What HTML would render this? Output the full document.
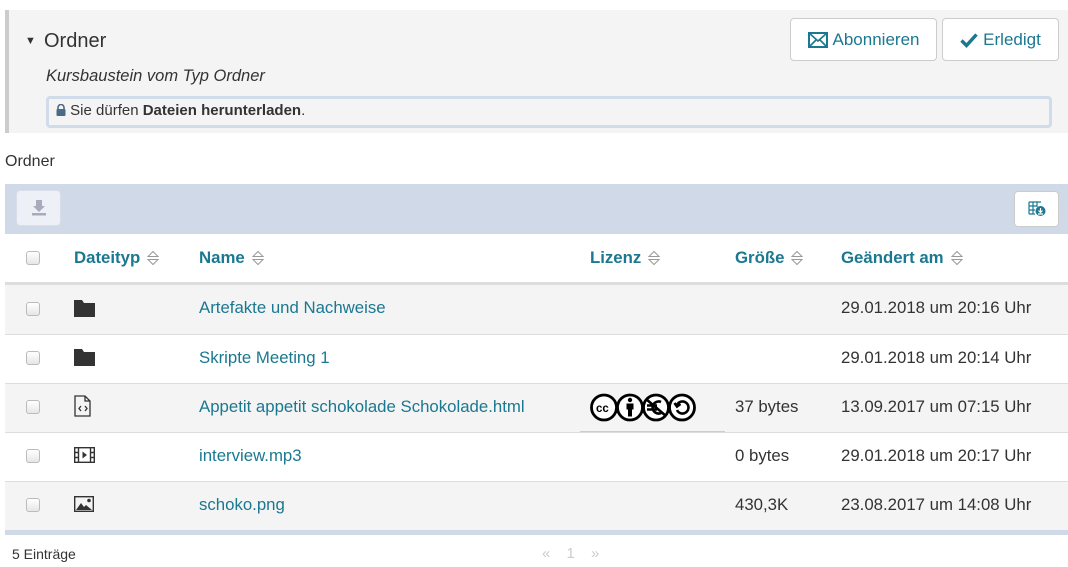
<!DOCTYPE html>
<html><head><meta charset="utf-8"><style>
*{box-sizing:border-box;margin:0;padding:0}
body{width:1068px;height:567px;background:#fff;font-family:"Liberation Sans",sans-serif;color:#333;position:relative;overflow:hidden;font-size:15px}
.a{position:absolute}
.panel{left:5px;top:10px;width:1063px;height:123px;background:#f4f4f4;border-left:4px solid #ccc}
.btn{background:#fff;border:1px solid #ccc;border-radius:4px;color:#1a7891;font-size:17px;display:flex;align-items:center;justify-content:center;gap:5px}
.teal{color:#1a7891}
.cb{width:14px;height:14px;border:1px solid #bbb;border-radius:3px;background:linear-gradient(#fff,#e6e6e6)}
.row{left:5px;width:1063px;height:49px;border-top:1px solid #ddd}
.row span{position:absolute;top:13px;font-size:16.8px}
.hd{font-weight:bold;font-size:16.8px;top:248px;color:#1a7891;display:flex;align-items:center}
.hd svg{margin-left:7px}
</style></head><body>
<div class="a panel"></div>
<div class="a" style="left:25px;top:35px;font-size:11px">&#9660;</div>
<div class="a" style="left:44px;top:30px;font-size:20px;color:#333">Ordner</div>
<div class="a" style="left:46px;top:67px;font-style:italic;font-size:16.5px">Kursbaustein vom Typ Ordner</div>
<div class="a" style="left:46px;top:96px;width:1006px;height:32px;border:3px solid #d1dcea;border-radius:4px;background:#f4f4f4;padding:3px 0 0 7px;font-size:15px">
<svg width="10" height="12" viewBox="0 0 10 12" style="vertical-align:-1px"><path d="M2 5V3.5a3 3 0 0 1 6 0V5" fill="none" stroke="#4a6a8a" stroke-width="1.6"/><rect x="0.5" y="5" width="9" height="7" rx="1" fill="#4a6a8a"/></svg> Sie dürfen <b>Dateien herunterladen</b>.</div>
<div class="a btn" style="left:790px;top:18px;width:147px;height:43px"><svg width="20" height="16" viewBox="0 0 20 16"><rect x="1" y="1" width="18" height="14" fill="none" stroke="#1a7891" stroke-width="2"/><path d="M1 1l9 8 9-8M1 15l7-7M19 15l-7-7" fill="none" stroke="#1a7891" stroke-width="1.6"/></svg>Abonnieren</div>
<div class="a btn" style="left:942px;top:18px;width:117px;height:43px"><svg width="18" height="16" viewBox="0 0 18 16"><path d="M1.5 8.5l5 5L16.5 2.5" fill="none" stroke="#1a7891" stroke-width="3.4"/></svg>Erledigt</div>
<div class="a" style="left:5px;top:153px;font-size:16px">Ordner</div>
<div class="a" style="left:5px;top:184px;width:1063px;height:50px;background:#cfd9e8"></div>
<div class="a" style="left:16px;top:190px;width:45px;height:36px;background:#eef0f7;border:1px solid #d8dde8;border-radius:4px"><svg class="a" style="left:14px;top:8px" width="16" height="17" viewBox="0 0 16 17"><path d="M5 1h6v6h3l-6 6-6-6h3z" fill="#aab"/><rect x="1" y="14" width="14" height="2.5" fill="#aab"/></svg></div>
<div class="a" style="left:1014px;top:191px;width:45px;height:36px;background:#fff;border:1px solid #ccc;border-radius:4px"><svg class="a" style="left:13px;top:9px" width="18" height="16" viewBox="0 0 18 16"><path d="M1 1h12M1 5h8M1 9h6M1 13h6M1 1v12M5 1v12M9 1v5" stroke="#1a7891" stroke-width="1.2" fill="none"/><circle cx="12.5" cy="10" r="5" fill="#1a7891"/><path d="M12.5 7v4M10.5 9.5l2 2 2-2M10 13h5" stroke="#fff" stroke-width="1.2" fill="none"/></svg></div>
<div class="a cb" style="left:26px;top:251px"></div>
<div class="a hd" style="left:74px">Dateityp<svg width="12" height="16" viewBox="0 0 12 16"><path d="M1 6.5L6 1.5l5 5zM1 9.5l5 5 5-5z" fill="none" stroke="#999"/></svg></div>
<div class="a hd" style="left:199px">Name<svg width="12" height="16" viewBox="0 0 12 16"><path d="M1 6.5L6 1.5l5 5zM1 9.5l5 5 5-5z" fill="none" stroke="#999"/></svg></div>
<div class="a hd" style="left:590px">Lizenz<svg width="12" height="16" viewBox="0 0 12 16"><path d="M1 6.5L6 1.5l5 5zM1 9.5l5 5 5-5z" fill="none" stroke="#999"/></svg></div>
<div class="a hd" style="left:735px">Größe<svg width="12" height="16" viewBox="0 0 12 16"><path d="M1 6.5L6 1.5l5 5zM1 9.5l5 5 5-5z" fill="none" stroke="#999"/></svg></div>
<div class="a hd" style="left:841px">Geändert am<svg width="12" height="16" viewBox="0 0 12 16"><path d="M1 6.5L6 1.5l5 5zM1 9.5l5 5 5-5z" fill="none" stroke="#999"/></svg></div>
<div class="a" style="left:5px;top:282px;width:1063px;height:3px;background:#ddd"></div>

<div class="a row" style="top:285px;background:#f4f4f4;border-top:none"><div class="a cb" style="left:21px;top:17px"></div><svg class="a" style="left:69px;top:15px" width="21" height="17"><path d="M0 0h8l2 3h11v14H0z" fill="#333"/></svg><span class="teal" style="left:194px">Artefakte und Nachweise</span><span style="left:836px">29.01.2018 um 20:16 Uhr</span></div>
<div class="a row" style="top:334px;background:#fff"><div class="a cb" style="left:21px;top:16px"></div><svg class="a" style="left:69px;top:14px" width="21" height="17"><path d="M0 0h8l2 3h11v14H0z" fill="#333"/></svg><span class="teal" style="left:194px">Skripte Meeting 1</span><span style="left:836px">29.01.2018 um 20:14 Uhr</span></div>
<div class="a row" style="top:383px;background:#f4f4f4"><div class="a cb" style="left:21px;top:16px"></div><svg class="a" style="left:69px;top:11px" width="18" height="22" viewBox="0 0 18 22"><path d="M1 1h10l5 5v15H1z M11 1v5h5" fill="none" stroke="#333" stroke-width="1.3"/><path d="M7 11l-2 2.5 2 2.5M11 11l2 2.5-2 2.5" fill="none" stroke="#333" stroke-width="1.3"/></svg><span class="teal" style="left:194px">Appetit appetit schokolade Schokolade.html</span>
<svg class="a" style="left:580px;top:9px" width="118" height="29" viewBox="0 0 118 29"><g fill="#fff" stroke="#000" stroke-width="2.8"><circle cx="19" cy="14.5" r="12.5"/><circle cx="45" cy="14.5" r="12.5"/><circle cx="71" cy="14.5" r="12.5"/><circle cx="97" cy="14.5" r="12.5"/></g><text x="11" y="19" font-size="11.5" font-weight="bold" font-family="Liberation Sans">cc</text><circle cx="45" cy="7" r="2.2" fill="#000"/><path d="M41.5 10.5h7v6h-1.5v7h-4v-7h-1.5z" fill="#000"/><path d="M76 9a6 6 0 1 0 0 11M62 12.5h10M62 16.5h10M61 6l20 17" fill="none" stroke="#000" stroke-width="2.6"/><path d="M92 12a6 6 0 1 1 0 5M89.5 10l2.5 3.5 3.5-2.5" fill="none" stroke="#000" stroke-width="2.6"/></svg>
<span style="left:730px">37 bytes</span><span style="left:836px">13.09.2017 um 07:15 Uhr</span></div>
<div class="a" style="left:580px;top:431px;width:145px;height:1px;background:#ccc"></div>
<div class="a row" style="top:432px;background:#fff"><div class="a cb" style="left:21px;top:16px"></div><svg class="a" style="left:69px;top:14px" width="21" height="16" viewBox="0 0 21 16"><rect x="0.7" y="0.7" width="19.6" height="14.6" fill="none" stroke="#333" stroke-width="1.4"/><path d="M4.5 0v16M16.5 0v16M0 5.5h4.5M0 10.5h4.5M16.5 5.5h4.5M16.5 10.5h4.5" stroke="#333" stroke-width="1.4"/><path d="M8.5 4.5l4.5 3.5-4.5 3.5z" fill="#333"/></svg><span class="teal" style="left:194px">interview.mp3</span><span style="left:730px">0 bytes</span><span style="left:836px">29.01.2018 um 20:17 Uhr</span></div>
<div class="a row" style="top:481px;background:#f4f4f4"><div class="a cb" style="left:21px;top:16px"></div><svg class="a" style="left:69px;top:14px" width="20" height="16" viewBox="0 0 20 16"><rect x="0.7" y="0.7" width="18.6" height="14.6" fill="none" stroke="#333" stroke-width="1.4"/><path d="M2 14l5-7 3 4 2-2 6 5z" fill="#333"/><circle cx="15" cy="4.5" r="1.8" fill="#333"/></svg><span class="teal" style="left:194px">schoko.png</span><span style="left:730px">430,3K</span><span style="left:836px">23.08.2017 um 14:08 Uhr</span></div>
<div class="a" style="left:5px;top:530px;width:1063px;height:5px;background:#cfd9e8"></div>
<div class="a" style="left:12px;top:546px;font-size:14px">5 Einträge</div>
<div class="a" style="left:542px;top:545px;font-size:15px;color:#ccc;word-spacing:12px">« 1 »</div>
</body></html>
